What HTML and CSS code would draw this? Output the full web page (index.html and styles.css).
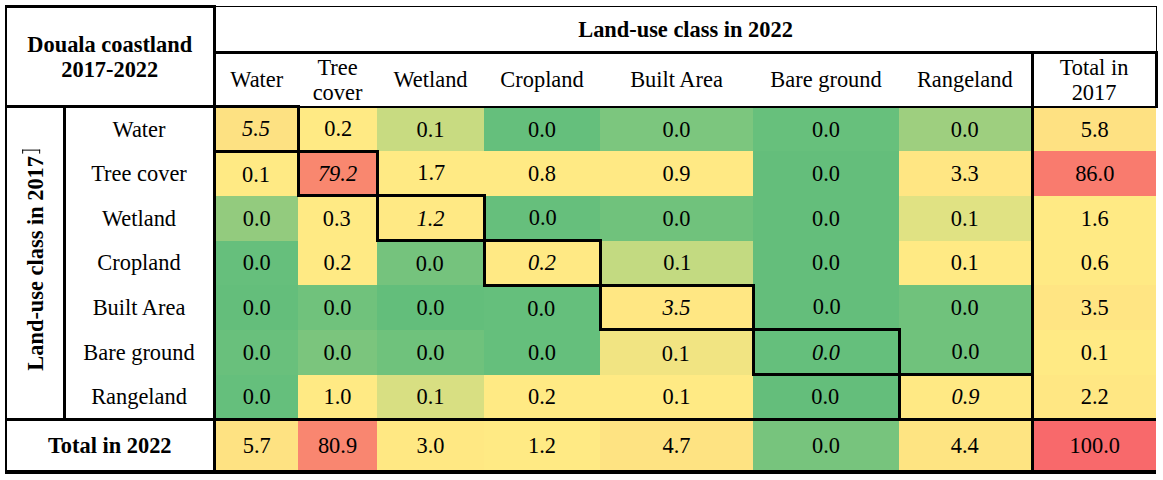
FILE: index.html
```html
<!DOCTYPE html>
<html lang="en">
<head>
<meta charset="utf-8">
<title>Douala coastland 2017-2022</title>
<link rel="stylesheet" href="styles.css">
</head>
<body>
<table class="matrix">
  <colgroup>
    <col class="c-vert"><col class="c-label"><col class="c-water"><col class="c-tree"><col class="c-wet"><col class="c-crop"><col class="c-built"><col class="c-bare"><col class="c-range"><col class="c-total">
  </colgroup>
  <tr class="r-top">
    <th class="corner" rowspan="2" colspan="2">Douala coastland<br>2017-2022</th>
    <th class="luc" colspan="8">Land-use class in 2022</th>
  </tr>
  <tr class="r-head">
    <th class="ch">Water</th>
    <th class="ch">Tree<br>cover</th>
    <th class="ch">Wetland</th>
    <th class="ch">Cropland</th>
    <th class="ch">Built Area</th>
    <th class="ch">Bare ground</th>
    <th class="ch">Rangeland</th>
    <th class="ch tot-h">Total in<br>2017</th>
  </tr>
  <tr class="r-data">
    <th class="vert" rowspan="7"><span class="vtext">Land-use class in 2017<span class="brk"></span></span></th>
    <th class="rl">Water</th>
    <td class="diag" style="background:#FDE182">5.5</td>
    <td style="background:#FFEA84">0.2</td>
    <td style="background:#C8DB81">0.1</td>
    <td style="background:#65BF7C">0.0</td>
    <td style="background:#7CC67E">0.0</td>
    <td style="background:#67C07C">0.0</td>
    <td style="background:#9ECF7F">0.0</td>
    <td class="tot" style="background:#FEE182">5.8</td>
  </tr>
  <tr class="r-data">
    <th class="rl">Tree cover</th>
    <td style="background:#FFEA84">0.1</td>
    <td class="diag" style="background:#F9876F">79.2</td>
    <td style="background:#FFEA84">1.7</td>
    <td style="background:#FFEA84">0.8</td>
    <td style="background:#FFE984">0.9</td>
    <td style="background:#64BE7B">0.0</td>
    <td style="background:#FFE683">3.3</td>
    <td class="tot" style="background:#F97B6E">86.0</td>
  </tr>
  <tr class="r-data">
    <th class="rl">Wetland</th>
    <td style="background:#93CB7E">0.0</td>
    <td style="background:#FFEA84">0.3</td>
    <td class="diag" style="background:#FFE984">1.2</td>
    <td style="background:#66BF7C">0.0</td>
    <td style="background:#70C27C">0.0</td>
    <td style="background:#64BE7B">0.0</td>
    <td style="background:#E0E283">0.1</td>
    <td class="tot" style="background:#FFEA84">1.6</td>
  </tr>
  <tr class="r-data">
    <th class="rl">Cropland</th>
    <td style="background:#66BF7C">0.0</td>
    <td style="background:#FFEA84">0.2</td>
    <td style="background:#75C37D">0.0</td>
    <td class="diag" style="background:#FFE984">0.2</td>
    <td style="background:#C3DA81">0.1</td>
    <td style="background:#64BE7B">0.0</td>
    <td style="background:#FFEA84">0.1</td>
    <td class="tot" style="background:#FFEA84">0.6</td>
  </tr>
  <tr class="r-data">
    <th class="rl">Built Area</th>
    <td style="background:#64BE7B">0.0</td>
    <td style="background:#70C27C">0.0</td>
    <td style="background:#63BE7B">0.0</td>
    <td style="background:#65BF7C">0.0</td>
    <td class="diag" style="background:#FFE783">3.5</td>
    <td style="background:#64BE7B">0.0</td>
    <td style="background:#70C27C">0.0</td>
    <td class="tot" style="background:#FFE583">3.5</td>
  </tr>
  <tr class="r-data">
    <th class="rl">Bare ground</th>
    <td style="background:#69C07C">0.0</td>
    <td style="background:#7BC57D">0.0</td>
    <td style="background:#6FC27C">0.0</td>
    <td style="background:#65BF7C">0.0</td>
    <td style="background:#F1E482">0.1</td>
    <td class="diag" style="background:#65BF7C">0.0</td>
    <td style="background:#70C27C">0.0</td>
    <td class="tot" style="background:#FFEA84">0.1</td>
  </tr>
  <tr class="r-data">
    <th class="rl">Rangeland</th>
    <td style="background:#65BF7C">0.0</td>
    <td style="background:#FFEA84">1.0</td>
    <td style="background:#D8DF82">0.1</td>
    <td style="background:#FFEA84">0.2</td>
    <td style="background:#FFEA84">0.1</td>
    <td style="background:#64BE7B">0.0</td>
    <td class="diag" style="background:#FFE984">0.9</td>
    <td class="tot" style="background:#FFE783">2.2</td>
  </tr>
  <tr class="r-total">
    <th class="tl" colspan="2">Total in 2022</th>
    <td style="background:#FEE282">5.7</td>
    <td style="background:#F98670">80.9</td>
    <td style="background:#FFE883">3.0</td>
    <td style="background:#FFEA84">1.2</td>
    <td style="background:#FEE382">4.7</td>
    <td style="background:#77C47D">0.0</td>
    <td style="background:#FEE482">4.4</td>
    <td class="tot" style="background:#F8696B">100.0</td>
  </tr>
</table>
</body>
</html>
```
FILE: styles.css
```css
html, body {
  margin: 0;
  padding: 0;
  background: #ffffff;
}

body {
  font-family: "Liberation Serif", "Times New Roman", serif;
  font-size: 22.4px;
  line-height: 25px;
  color: #000000;
}

.matrix {
  margin: 5px 0 0 5px;
  border-collapse: collapse;
  table-layout: fixed;
  width: 1150px;
}

.c-vert { width: 58px; }
.c-label { width: 150px; }
.c-water { width: 84px; }
.c-tree { width: 79px; }
.c-wet { width: 107px; }
.c-crop { width: 116px; }
.c-built { width: 153px; }
.c-bare { width: 146px; }
.c-range { width: 133px; }
.c-total { width: 124px; }

.matrix th,
.matrix td {
  padding: 0;
  text-align: center;
  vertical-align: middle;
  font-weight: normal;
}

.r-top { height: 46px; }
.r-head { height: 54px; }
.r-data { height: 44.7px; }
.r-total { height: 53px; }

.corner {
  font-weight: bold !important;
  border: 3px solid #000;
  border-left-width: 2px;
}

.luc {
  font-weight: bold !important;
  border-top: 1px solid #000;
  border-right: 1px solid #000;
  border-bottom: 3px solid #000;
}

.ch {
  border-bottom: 2px solid #000;
}

.tot-h {
  border-left: 3px solid #000;
  border-right: 3px solid #000;
}

.vert {
  border-left: 2px solid #000;
  border-right: 3px solid #000;
  border-bottom: 3px solid #000;
}

.vtext {
  display: inline-block;
  writing-mode: vertical-rl;
  transform: rotate(180deg);
  font-weight: bold;
  white-space: nowrap;
  line-height: 22px;
}

.brk {
  display: inline-block;
  width: 18px;
  height: 4px;
  margin-top: 2px;
  border-bottom: 1px solid #000;
  border-left: 1px solid #000;
  border-right: 1px solid #000;
  box-sizing: border-box;
  vertical-align: middle;
}

.rl {
  border-right: 3px solid #000;
}

.diag {
  border: 3px solid #000;
  font-style: italic;
}

.tot {
  border-left: 3px solid #000;
}

.r-total th,
.r-total td {
  border-top: 3px solid #000;
  border-bottom: 4px solid #000;
}

.tl {
  font-weight: bold !important;
  border-left: 2px solid #000;
  border-right: 3px solid #000;
}
```
